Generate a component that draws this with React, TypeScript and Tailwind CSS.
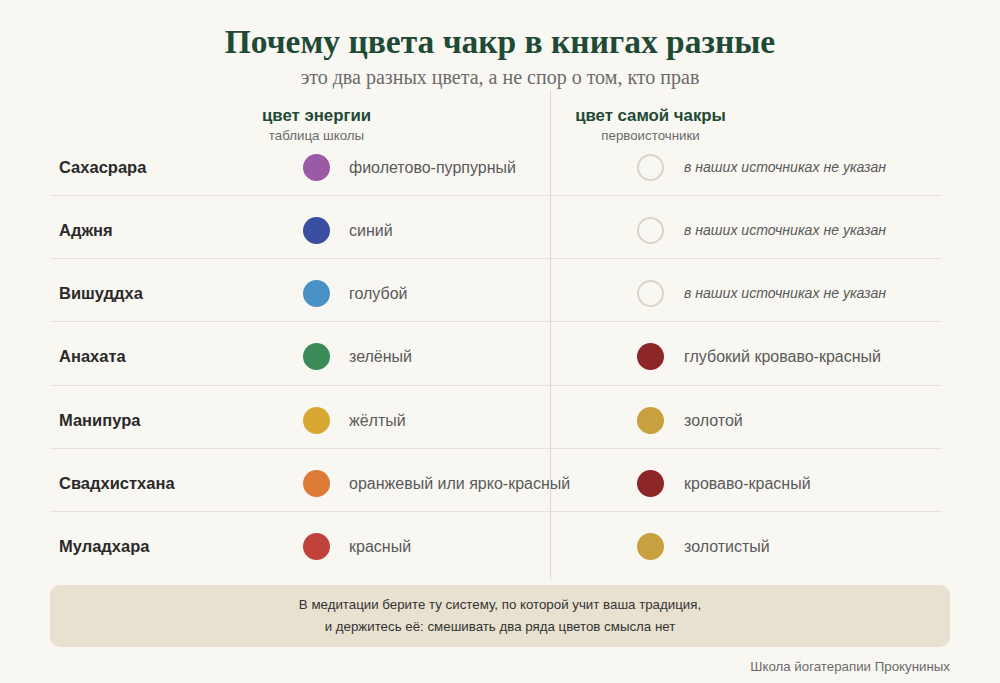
type Chakra = {
  name: string;
  energy: string;
  energyText: string;
  own?: string;
  ownText?: string;
};

const chakras: Chakra[] = [
  { name: "Сахасрара", energy: "bg-[#9b5aa6]", energyText: "фиолетово-пурпурный" },
  { name: "Аджня", energy: "bg-[#394ea1]", energyText: "синий" },
  { name: "Вишуддха", energy: "bg-[#4a92c6]", energyText: "голубой" },
  {
    name: "Анахата",
    energy: "bg-[#3a8b57]",
    energyText: "зелёный",
    own: "bg-[#8d2727]",
    ownText: "глубокий кроваво-красный",
  },
  {
    name: "Манипура",
    energy: "bg-[#d9a832]",
    energyText: "жёлтый",
    own: "bg-[#c8a03f]",
    ownText: "золотой",
  },
  {
    name: "Свадхистхана",
    energy: "bg-[#dc7a36]",
    energyText: "оранжевый или ярко-красный",
    own: "bg-[#8d2727]",
    ownText: "кроваво-красный",
  },
  {
    name: "Муладхара",
    energy: "bg-[#c0413b]",
    energyText: "красный",
    own: "bg-[#c8a03f]",
    ownText: "золотистый",
  },
];

const sans = "font-['Liberation_Sans',Arial,sans-serif]";
const serif = "font-['Liberation_Serif','Times_New_Roman',serif]";

const ColumnHead = ({ title, sub }: { title: string; sub: string }) => (
  <div className="flex w-[27px] flex-col items-center">
    <div className="whitespace-nowrap text-[16.8px] font-bold leading-[20px] text-[#1f4a36]">
      {title}
    </div>
    <div className="mt-[2px] whitespace-nowrap text-[13.3px] leading-[16px] text-[#6b6b6b]">
      {sub}
    </div>
  </div>
);

const App = () => {
  return (
    <div className={`min-h-screen bg-[#f9f7f2] px-[50px] pt-[24px] ${sans}`}>
      {/* Header */}

      <h1 className={`text-center text-[33.5px] font-bold leading-[36px] text-[#1f4a36] ${serif}`}>
        Почему цвета чакр в книгах разные
      </h1>

      <p className={`mt-[5px] text-center text-[20px] leading-[24px] text-[#6b6b6b] ${serif}`}>
        это два разных цвета, а не спор о том, кто прав
      </p>

      {/* Table */}

      <div className="mt-[1px] w-[892px]">
        <div className="flex h-[56px]">
          <div className="w-[253px]" />
          <div className="w-[247px] pt-[16px]">
            <ColumnHead title="цвет энергии" sub="таблица школы" />
          </div>
          <div className="flex-1 border-l border-[#ddd8cd] pl-[86px] pt-[16px]">
            <ColumnHead title="цвет самой чакры" sub="первоисточники" />
          </div>
        </div>

        {chakras.map((c, i) => {
          const first = i === 0;
          const last = i === chakras.length - 1;
          const pad = `${first ? "pt-[7.5px]" : "pt-[21px]"} ${last ? "pb-[19px]" : "pb-[14.3px]"}`;

          return (
            <div
              key={c.name}
              className={`flex items-stretch ${last ? "" : "border-b border-[#e6e2d9]"}`}
            >
              <div className={`flex w-[253px] items-center pl-[9px] ${pad}`}>
                <span className="text-[16.5px] font-bold leading-[27px] text-[#2a2a2a]">
                  {c.name}
                </span>
              </div>

              <div className={`flex w-[247px] items-center gap-[19px] ${pad}`}>
                <span className={`h-[27px] w-[27px] shrink-0 rounded-full ${c.energy}`} />
                <span className="whitespace-nowrap text-[16px] leading-[27px] text-[#5a5a5a]">
                  {c.energyText}
                </span>
              </div>

              <div
                className={`flex flex-1 items-center gap-[20px] border-l border-[#ddd8cd] pl-[86px] ${pad}`}
              >
                {c.own ? (
                  <span className={`h-[27px] w-[27px] shrink-0 rounded-full ${c.own}`} />
                ) : (
                  <span className="h-[27px] w-[27px] shrink-0 rounded-full border-2 border-[#d9d4c6]" />
                )}
                {c.ownText ? (
                  <span className="whitespace-nowrap text-[16px] leading-[27px] text-[#5a5a5a]">
                    {c.ownText}
                  </span>
                ) : (
                  <span className="whitespace-nowrap text-[14.1px] italic leading-[27px] text-[#5a5a5a]">
                    в наших источниках не указан
                  </span>
                )}
              </div>
            </div>
          );
        })}
      </div>

      {/* Note */}

      <div className="mt-[6px] rounded-[10px] bg-[#e8e1d0] py-[9px] text-center text-[13.3px] leading-[22px] text-[#333333]">
        <p>В медитации берите ту систему, по которой учит ваша традиция,</p>
        <p>и держитесь её: смешивать два ряда цветов смысла нет</p>
      </div>

      <div className="mt-[11px] text-right text-[13.3px] leading-[18px] text-[#6b6b6b]">
        Школа йогатерапии Прокуниных
      </div>
    </div>
  );
};

export default App;
